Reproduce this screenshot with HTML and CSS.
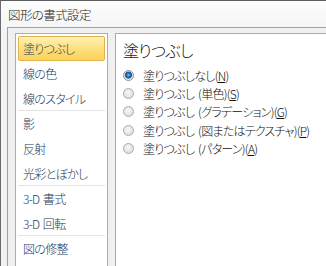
FILE: index.html
```html
<!DOCTYPE html>
<html lang="ja">
<head>
<meta charset="utf-8">
<title>図形の書式設定</title>
<link rel="stylesheet" href="styles.css">
</head>
<body>
<div class="window">
  <div class="titlebar"><span class="title">図形の書式設定</span></div>
  <div class="client">
    <ul class="nav">
      <li class="item selected">塗りつぶし</li>
      <li class="item">線の色</li>
      <li class="item sep">線のスタイル</li>
      <li class="item">影</li>
      <li class="item">反射</li>
      <li class="item sep">光彩とぼかし</li>
      <li class="item">3-D 書式</li>
      <li class="item sep">3-D 回転</li>
      <li class="item">図の修整</li>
    </ul>
    <div class="panel">
      <h2 class="heading">塗りつぶし</h2>
      <div class="options">
        <div class="option"><span class="radio checked"></span><span>塗りつぶしなし(<u>N</u>)</span></div>
        <div class="option"><span class="radio"></span><span>塗りつぶし (単色)(<u>S</u>)</span></div>
        <div class="option"><span class="radio"></span><span>塗りつぶし (グラデーション)(<u>G</u>)</span></div>
        <div class="option"><span class="radio"></span><span>塗りつぶし (図またはテクスチャ)(<u>P</u>)</span></div>
        <div class="option"><span class="radio"></span><span>塗りつぶし (パターン)(<u>A</u>)</span></div>
      </div>
    </div>
  </div>
</div>
</body>
</html>
```
FILE: styles.css
```css
html, body {
  margin: 0;
  padding: 0;
}
body {
  width: 326px;
  height: 266px;
  overflow: hidden;
  font-family: "Noto Sans CJK JP", "Noto Sans", sans-serif;
  font-feature-settings: "palt";
  font-weight: 300;
}
.window {
  height: 266px;
  box-sizing: border-box;
  border-top: 1px solid #5c5c5c;
  border-left: 1px solid #6c6c6c;
  background: linear-gradient(#fdfdfd, #f3f4f5 30px, #f1f2f3);
  display: flex;
  flex-direction: column;
}
.titlebar {
  height: 26px;
  flex: none;
  display: flex;
  align-items: center;
  padding-left: 7px;
}
.title {
  font-size: 12.5px;
  color: #1a1a1a;
  letter-spacing: -0.6px;
}
.client {
  flex: 1;
  min-height: 0;
  margin-left: 6px;
  border-top: 1px solid #a0a0a0;
  border-left: 1px solid #a0a0a0;
  background: #f0f0f0;
  display: flex;
  gap: 7px;
  padding: 5px 0 0 7px;
}
.nav {
  width: 93px;
  flex: none;
  box-sizing: border-box;
  border: 1px solid #a7adb5;
  border-bottom: none;
  background: #fff;
  margin: 0;
  padding: 2px 2px 0;
  list-style: none;
}
.item {
  height: 25px;
  box-sizing: border-box;
  padding-left: 5px;
  display: flex;
  align-items: center;
  font-size: 12px;
  color: #1e395b;
  letter-spacing: -0.7px;
  word-spacing: 1.5px;
}
.item.selected {
  border: 1px solid #e2b34c;
  border-radius: 2px;
  padding-left: 4px;
  background: linear-gradient(#fff2b6, #fde183 45%, #fcd35a);
}
.item.sep {
  border-bottom: 1px solid #e4e4e4;
}
.panel {
  flex: 1;
  border: 1px solid #a7adb5;
  border-right: none;
  border-bottom: none;
  background: #fff;
  padding: 6px 0 0 7px;
}
.heading {
  margin: 0;
  font-size: 16px;
  font-weight: 300;
  line-height: 20px;
  color: #222;
  letter-spacing: -0.7px;
}
.options {
  margin-top: 6px;
  display: flex;
  flex-direction: column;
}
.option {
  height: 18.3px;
  display: flex;
  align-items: center;
  gap: 9px;
  font-size: 12px;
  color: #111;
  letter-spacing: -0.75px;
  word-spacing: 2px;
}
.option u {
  text-underline-offset: 1px;
}
.radio {
  width: 11px;
  height: 11px;
  flex: none;
  box-sizing: border-box;
  border: 1px solid #acacac;
  border-radius: 50%;
  background: radial-gradient(circle at 45% 40%, #f8f8f8, #e0e0e0 70%, #d2d2d2);
}
.radio.checked {
  border-color: #8e8e8e;
  background: radial-gradient(circle at 50% 45%, #7cc6f6 0, #2a78c8 1.6px, #17508f 3.2px, #dfe3e8 3.8px, #f2f2f2 100%);
}
```
